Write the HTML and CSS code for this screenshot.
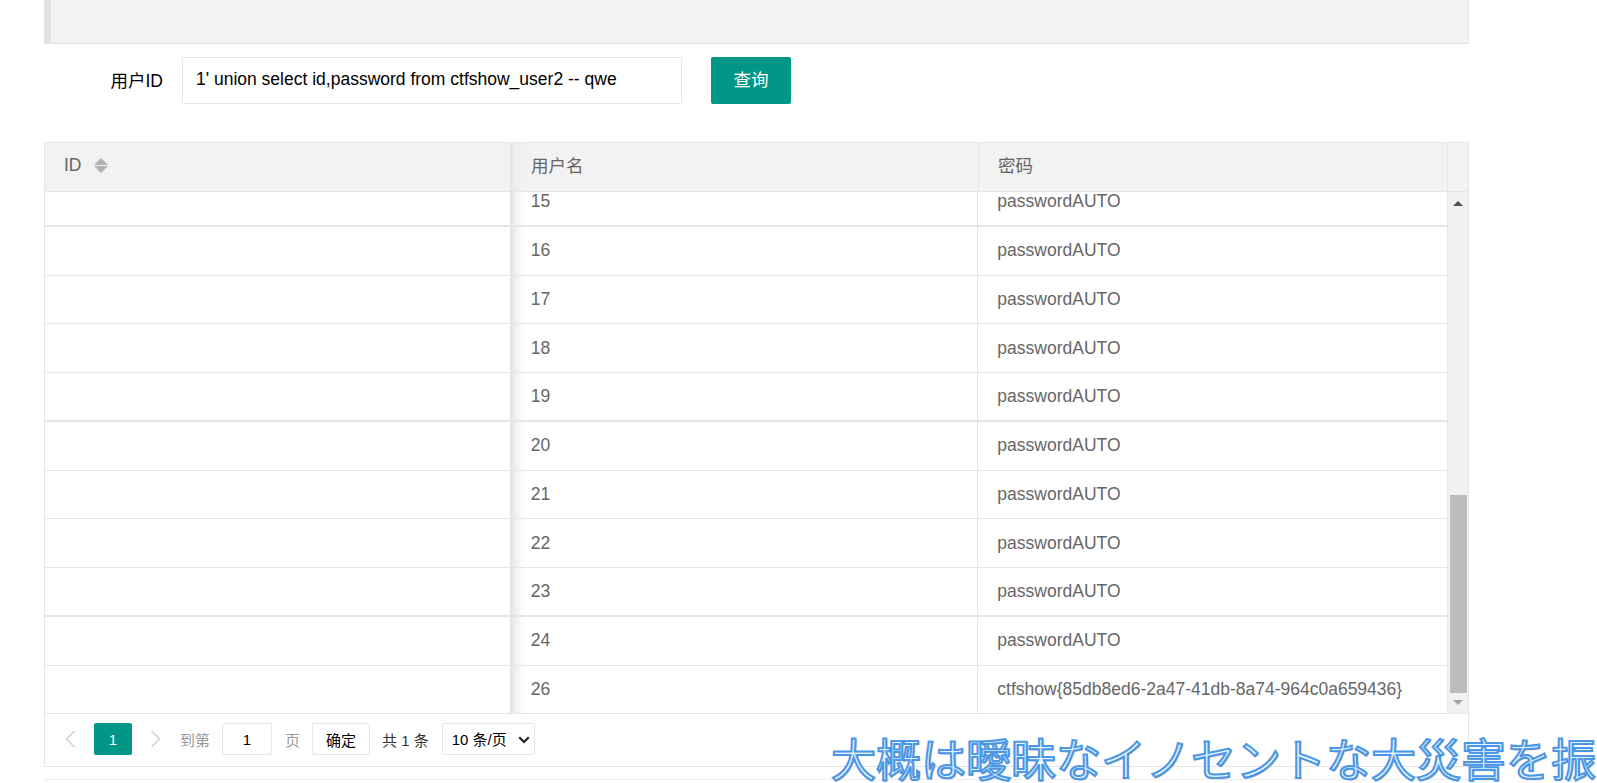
FILE: index.html
```html
<!DOCTYPE html>
<html lang="zh-CN">
<head>
  <meta charset="UTF-8">
  <title>ctfshow</title>
  <link rel="stylesheet" href="styles.css">
</head>
<body>
  <div class="container">
    <div class="quote"></div>

    <form class="search-form">
      <label class="form-label">用户ID</label>
      <input class="form-input" type="text" value="1' union select id,password from ctfshow_user2 -- qwe">
      <button class="btn" type="button">查询</button>
    </form>

    <div class="data-table">
      <div class="table-head">
        <div class="th col-id">ID
          <span class="sort"><i class="sort-up"></i><i class="sort-down"></i></span>
        </div>
        <div class="th col-name">用户名</div>
        <div class="th col-pass">密码</div>
        <div class="th col-gutter"></div>
      </div>

      <div class="table-main">
        <div class="table-rows">
          <div class="row row-first row-thick"><div class="td col-id"></div><div class="td col-name">15</div><div class="td col-pass">passwordAUTO</div></div>
          <div class="row"><div class="td col-id"></div><div class="td col-name">16</div><div class="td col-pass">passwordAUTO</div></div>
          <div class="row"><div class="td col-id"></div><div class="td col-name">17</div><div class="td col-pass">passwordAUTO</div></div>
          <div class="row"><div class="td col-id"></div><div class="td col-name">18</div><div class="td col-pass">passwordAUTO</div></div>
          <div class="row row-thick"><div class="td col-id"></div><div class="td col-name">19</div><div class="td col-pass">passwordAUTO</div></div>
          <div class="row"><div class="td col-id"></div><div class="td col-name">20</div><div class="td col-pass">passwordAUTO</div></div>
          <div class="row"><div class="td col-id"></div><div class="td col-name">21</div><div class="td col-pass">passwordAUTO</div></div>
          <div class="row"><div class="td col-id"></div><div class="td col-name">22</div><div class="td col-pass">passwordAUTO</div></div>
          <div class="row row-thick"><div class="td col-id"></div><div class="td col-name">23</div><div class="td col-pass">passwordAUTO</div></div>
          <div class="row"><div class="td col-id"></div><div class="td col-name">24</div><div class="td col-pass">passwordAUTO</div></div>
          <div class="row row-last"><div class="td col-id"></div><div class="td col-name">26</div><div class="td col-pass">ctfshow{85db8ed6-2a47-41db-8a74-964c0a659436}</div></div>
        </div>
        <div class="scrollbar">
          <i class="arrow-up"></i>
          <div class="scroll-track"><div class="scroll-thumb"></div></div>
          <i class="arrow-down"></i>
        </div>
      </div>

      <div class="pager">
        <svg class="pager-arrow" width="12" height="20" viewBox="0 0 12 20"><path d="M10.5 2 2.5 10l8 8" fill="none" stroke="#d2d2d2" stroke-width="1.6"/></svg>
        <span class="page-current">1</span>
        <svg class="pager-arrow" width="12" height="20" viewBox="0 0 12 20"><path d="M1.5 2l8 8-8 8" fill="none" stroke="#d2d2d2" stroke-width="1.6"/></svg>
        <span class="pager-text goto">到第</span>
        <input class="pager-input" type="text" value="1">
        <span class="pager-text page-word">页</span>
        <button class="pager-btn" type="button">确定</button>
        <span class="pager-count">共 1 条</span>
        <span class="select-wrap">
          <select class="pager-select"><option>10 条/页</option></select>
          <svg class="select-arrow" width="12" height="8" viewBox="0 0 12 8"><path d="M1.2 1.2 6 6l4.8-4.8" fill="none" stroke="#222" stroke-width="2.2"/></svg>
        </span>
      </div>
    </div>

    <div class="bottom-line"></div>
  </div>

  <div class="subtitle">大概は曖昧なイノセントな大災害を振</div>
</body>
</html>
```

FILE: styles.css
```css
html, body {
  margin: 0;
  padding: 0;
  height: 783px;
  overflow: hidden;
  background: #fff;
}
body {
  font-family: "Liberation Sans", "Noto Sans CJK SC", sans-serif;
  font-size: 17.5px;
  color: #666;
}
.container {
  width: 1425px;
  margin-left: 44px;
}
.quote {
  height: 44px;
  box-sizing: border-box;
  background: #f2f2f2;
  border-left: 7px solid #e2e2e2;
  border-right: 1px solid #e6e6e6;
  border-bottom: 1px solid #e2e2e2;
}

/* search form */
.search-form {
  display: flex;
  align-items: center;
  height: 47px;
  margin: 13px 0 38px;
}
.form-label {
  width: 119px;
  padding-bottom: 3px;
  text-align: right;
  color: #000;
}
.form-input {
  width: 500px;
  height: 47px;
  box-sizing: border-box;
  margin-left: 19px;
  padding: 0 13px 2px;
  border: 1px solid #e6e6e6;
  border-radius: 2px;
  font: inherit;
  color: #000;
  outline: none;
}
.btn {
  width: 80px;
  height: 47px;
  margin-left: 29px;
  padding: 0 0 4px;
  border: none;
  border-radius: 2px;
  background: #009688;
  color: #fff;
  font: inherit;
}

/* table */
.data-table {
  border: 1px solid #e6e6e6;
  height: 625px;
  box-sizing: border-box;
}
.table-head {
  display: flex;
  height: 48px;
  background: #f2f2f2;
  border-bottom: 1px solid #e6e6e6;
}
.th, .td {
  box-sizing: border-box;
  display: flex;
  align-items: center;
  padding-left: 19px;
}
.th { padding-bottom: 3px; }
.th.col-name, .th.col-pass { padding-bottom: 5px; }
.col-id { width: 468px; border-right: 3px solid #e6e6e6; }
.col-name { width: 466px; padding-left: 18px; border-right: 1px solid #e6e6e6; }
.col-pass { width: 469px; }
.th.col-pass { border-right: 1px solid #e6e6e6; }
.col-gutter { flex: 1; padding: 0; }
.th.col-name, .td.col-name {
  background: linear-gradient(90deg, #ececec, rgba(255,255,255,0) 12px);
}
.sort {
  display: inline-flex;
  flex-direction: column;
  gap: 1px;
  margin-left: 12px;
}
.sort-up, .sort-down {
  display: block;
  width: 0;
  height: 0;
  border-left: 7px solid transparent;
  border-right: 7px solid transparent;
}
.sort-up { border-bottom: 7px solid #b2b2b2; }
.sort-down { border-top: 7px solid #b2b2b2; }

.table-main {
  display: flex;
  height: 521px;
  overflow: hidden;
}
.table-rows {
  width: 1403px;
  flex: none;
  border-right: 1px solid #e6e6e6;
  box-sizing: border-box;
  overflow: hidden;
}
.row {
  display: flex;
  height: 48.75px;
  box-sizing: border-box;
  border-bottom: 1px solid #e6e6e6;
}
.row .td { height: 100%; }
.row-first { margin-top: -14px; }
.row-thick { border-bottom-width: 2px; }
.row-last { border-bottom: none; }

.scrollbar {
  flex: 1;
  display: flex;
  flex-direction: column;
  align-items: center;
  background: #f1f1f1;
}
.arrow-up, .arrow-down {
  display: block;
  width: 0;
  height: 0;
  flex: none;
  border-left: 5px solid transparent;
  border-right: 5px solid transparent;
}
.arrow-up {
  margin: 9px 0 6px;
  border-bottom: 5px solid #505050;
}
.arrow-down {
  margin: 7px 0 8px;
  border-top: 5px solid #a3a3a3;
}
.scroll-track {
  flex: 1;
  width: 100%;
  display: flex;
  flex-direction: column;
  justify-content: flex-end;
  align-items: center;
}
.scroll-thumb {
  width: 17px;
  height: 198px;
  background: #bdbdbd;
}

/* pager */
.pager {
  display: flex;
  align-items: center;
  height: 53px;
  box-sizing: border-box;
  padding: 0 0 2px 19px;
  border-top: 1px solid #e6e6e6;
  font-size: 15px;
}
.page-current {
  width: 38px;
  height: 32px;
  margin: 0 18px;
  border-radius: 2px;
  background: #009688;
  color: #fff;
  display: flex;
  align-items: center;
  justify-content: center;
}
.pager-text { color: #999; }
.goto { margin-left: 18px; }
.pager-input {
  width: 50px;
  height: 32px;
  box-sizing: border-box;
  margin-left: 12px;
  border: 1px solid #e6e6e6;
  border-radius: 2px;
  font: inherit;
  color: #000;
  text-align: center;
}
.page-word { margin-left: 13px; }
.pager-btn {
  width: 58px;
  height: 32px;
  margin-left: 12px;
  padding: 0;
  background: #fff;
  border: 1px solid #e6e6e6;
  border-radius: 2px;
  font: inherit;
  color: #000;
}
.pager-count {
  margin-left: 12px;
  color: #333;
}
.select-wrap {
  position: relative;
  display: flex;
  margin-left: 13px;
}
.pager-select {
  appearance: none;
  width: 93px;
  height: 32px;
  padding: 0 0 0 9px;
  background: #fff;
  border: 1px solid #e6e6e6;
  border-radius: 2px;
  font: inherit;
  color: #000;
}
.select-arrow {
  position: absolute;
  right: 5px;
  top: 13px;
}
.bottom-line {
  height: 1px;
  margin-top: 12px;
  background: #eee;
}

/* video subtitle over the page */
.subtitle {
  position: absolute;
  left: 831px;
  top: 733px;
  width: 766px;
  overflow: hidden;
  white-space: nowrap;
  font-family: "Noto Sans CJK JP", sans-serif;
  font-size: 45px;
  line-height: 50px;
  color: #e4f3ff;
  -webkit-text-stroke: 2px #4a97e8;
  text-shadow: 1px 1px 1px rgba(60,60,60,.55);
}
```
